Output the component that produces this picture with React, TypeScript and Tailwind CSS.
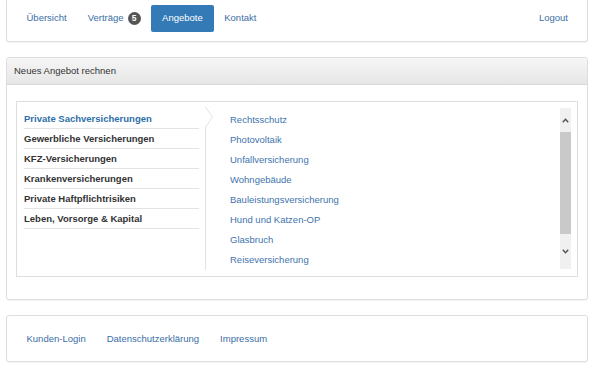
const navLinks = ['Übersicht', 'Verträge', 'Angebote', 'Kontakt'];

const categories = [
  'Private Sachversicherungen',
  'Gewerbliche Versicherungen',
  'KFZ-Versicherungen',
  'Krankenversicherungen',
  'Private Haftpflichtrisiken',
  'Leben, Vorsorge & Kapital',
];

const products = [
  'Rechtsschutz',
  'Photovoltaik',
  'Unfallversicherung',
  'Wohngebäude',
  'Bauleistungsversicherung',
  'Hund und Katzen-OP',
  'Glasbruch',
  'Reiseversicherung',
];

const footerLinks = ['Kunden-Login', 'Datenschutzerklärung', 'Impressum'];

const Scrollbar = () => (
  <div className="mt-[6px] mr-[6px] flex h-[161px] w-[11px] shrink-0 flex-col bg-[#f0f0f0]">
    <div className="flex h-[24px] items-center justify-center">
      <svg width="7" height="5" viewBox="0 0 7 5">
        <path d="M0.8 4.2 L3.5 1.3 L6.2 4.2" fill="none" stroke="#505050" strokeWidth="1.4" />
      </svg>
    </div>
    <div className="h-[102px] bg-[#c9c9c9]" />
    <div className="flex h-[35px] items-center justify-center">
      <svg width="7" height="5" viewBox="0 0 7 5">
        <path d="M0.8 0.8 L3.5 3.7 L6.2 0.8" fill="none" stroke="#505050" strokeWidth="1.4" />
      </svg>
    </div>
  </div>
);

export default function App() {
  return (
    <div className="min-h-screen w-[600px] bg-white pr-[12px] pl-[6px] font-['Liberation_Sans',Arial,sans-serif] text-[9.5px] text-[#333]">
      <nav className="flex h-[42px] items-start rounded-b-[3px] border border-t-0 border-[#dedede] px-[9px] pt-[5px] shadow-[0_1px_1px_rgba(0,0,0,0.05)]">
        {navLinks.map((label) =>
          label === 'Angebote' ? (
            <span
              key={label}
              className="flex h-[27px] items-center rounded-[2px] bg-[#337ab7] px-[11px] text-white"
            >
              {label}
            </span>
          ) : (
            <span key={label} className="flex h-[27px] items-center px-[10.5px] text-[#3a6ea5]">
              {label}
              {label === 'Verträge' && (
                <span className="ml-[4px] flex size-[13px] items-center justify-center rounded-full bg-[#555] text-[8.5px] font-bold text-white">
                  5
                </span>
              )}
            </span>
          ),
        )}
        <span className="ml-auto flex h-[27px] items-center px-[10px] text-[#3a6ea5]">Logout</span>
      </nav>

      <section className="mt-[15px] rounded-[3px] border border-[#dedede] shadow-[0_1px_1px_rgba(0,0,0,0.05)]">
        <div className="flex h-[27px] items-center rounded-t-[3px] border-b border-[#dadada] bg-gradient-to-b from-[#f6f6f6] to-[#e6e6e6] pl-[7px] text-[#333]">
          Neues Angebot rechnen
        </div>
        <div className="px-[9px] pt-[16px] pb-[22px]">
          <div className="flex h-[176px] border border-[#dedede]">
            <ul className="ml-[7px] w-[175px] shrink-0 pt-[7px]">
              {categories.map((c, i) => (
                <li
                  key={c}
                  className={`flex h-[20px] items-center border-b border-[#e3e3e3] pt-px font-bold ${
                    i === 0 ? 'text-[#2f6ea8]' : 'text-[#333]'
                  }`}
                >
                  {c}
                </li>
              ))}
            </ul>
            <svg className="mt-[5px] ml-[6px] shrink-0" width="9" height="163" viewBox="0 0 9 163">
              <path d="M0.5 0 L7.5 10 L0.5 20 V163" fill="none" stroke="#e2e2e2" strokeWidth="1" />
            </svg>
            <ul className="flex-1 pt-[8px] pl-[16px]">
              {products.map((p) => (
                <li key={p} className="flex h-[20px] items-center text-[#4174ad]">
                  {p}
                </li>
              ))}
            </ul>
            <Scrollbar />
          </div>
        </div>
      </section>

      <footer className="mt-[15px] flex h-[47px] items-center rounded-[3px] border border-[#dedede] px-[9px] pt-px shadow-[0_1px_1px_rgba(0,0,0,0.05)]">
        {footerLinks.map((l) => (
          <span key={l} className="px-[10.5px] text-[#3a6ea5]">
            {l}
          </span>
        ))}
      </footer>
    </div>
  );
}
